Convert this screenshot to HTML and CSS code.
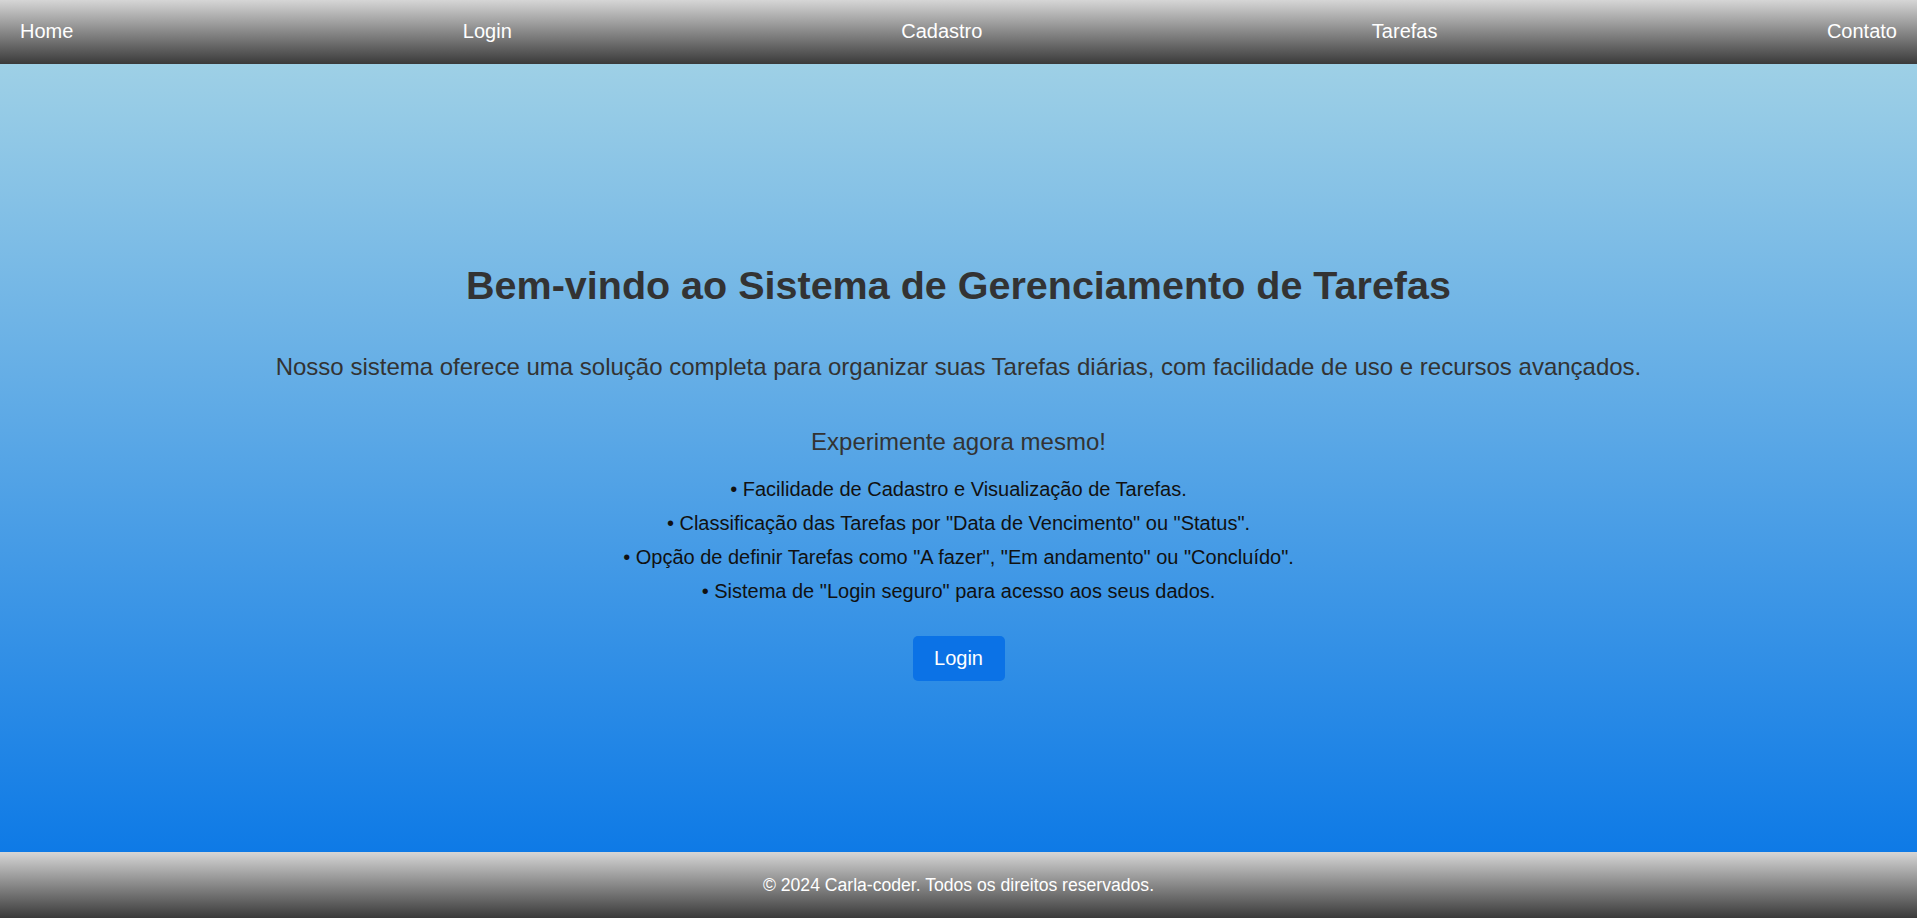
FILE: index.html
```html
<!DOCTYPE html>
<html lang="pt-BR">
<head>
<meta charset="utf-8">
<title>Sistema de Gerenciamento de Tarefas</title>
<link rel="stylesheet" href="styles.css">
</head>
<body>
<header class="topbar">
  <nav class="nav">
    <a href="#" class="nav-link">Home</a>
    <a href="#" class="nav-link">Login</a>
    <a href="#" class="nav-link">Cadastro</a>
    <a href="#" class="nav-link">Tarefas</a>
    <a href="#" class="nav-link">Contato</a>
  </nav>
</header>
<main class="hero">
  <h1 class="hero-title">Bem-vindo ao Sistema de Gerenciamento de Tarefas</h1>
  <p class="hero-lead">Nosso sistema oferece uma solução completa para organizar suas Tarefas diárias, com facilidade de uso e recursos avançados.</p>
  <h2 class="hero-sub">Experimente agora mesmo!</h2>
  <ul class="features">
    <li>• Facilidade de Cadastro e Visualização de Tarefas.</li>
    <li>• Classificação das Tarefas por "Data de Vencimento" ou "Status".</li>
    <li>• Opção de definir Tarefas como "A fazer", "Em andamento" ou "Concluído".</li>
    <li>• Sistema de "Login seguro" para acesso aos seus dados.</li>
  </ul>
  <a href="#" class="btn">Login</a>
</main>
<footer class="footer">
  <p class="footer-text">© 2024 Carla-coder. Todos os direitos reservados.</p>
</footer>
</body>
</html>
```

FILE: styles.css
```css
* { box-sizing: border-box; }
html, body {
  margin: 0;
  padding: 0;
  height: 100%;
}
body {
  font-family: "Liberation Sans", Arial, sans-serif;
  display: flex;
  flex-direction: column;
  min-height: 918px;
  overflow: hidden;
}
.topbar {
  height: 64px;
  flex: 0 0 64px;
  background: linear-gradient(to bottom, #d6d6d6, #3a3a3a);
}
.nav {
  height: 100%;
  display: flex;
  justify-content: space-between;
  align-items: center;
  padding: 0 20px 2px 20px;
}
.nav-link {
  color: #ffffff;
  text-decoration: none;
  font-size: 20px;
}
.hero {
  flex: 1 1 auto;
  background: linear-gradient(to bottom, #9ed0e6, #0e7ae6);
  display: flex;
  flex-direction: column;
  align-items: center;
  justify-content: flex-start;
  padding-top: 198px;
  text-align: center;
}
.hero-title {
  margin: 0;
  font-size: 39.5px;
  font-weight: bold;
  color: #333333;
  line-height: 46px;
}
.hero-lead {
  margin: 44px 0 0 0;
  font-size: 24px;
  color: #333333;
  line-height: 30px;
}
.hero-sub {
  margin: 45px 0 0 0;
  font-size: 24px;
  font-weight: normal;
  color: #333333;
  line-height: 30px;
}
.features {
  list-style: none;
  margin: 15px 0 0 0;
  padding: 0;
}
.features li {
  font-size: 20px;
  line-height: 34px;
  color: #111111;
}
.btn {
  margin-top: 28px;
  display: inline-block;
  width: 92px;
  height: 45px;
  line-height: 45px;
  background: #0b72e6;
  color: #ffffff;
  text-decoration: none;
  font-size: 20px;
  border-radius: 5px;
}
.footer {
  flex: 0 0 66px;
  height: 66px;
  background: linear-gradient(to bottom, #d6d6d6, #3a3a3a);
  display: flex;
  align-items: center;
  justify-content: center;
}
.footer-text {
  margin: 0;
  color: #ffffff;
  font-size: 17.6px;
}
```
